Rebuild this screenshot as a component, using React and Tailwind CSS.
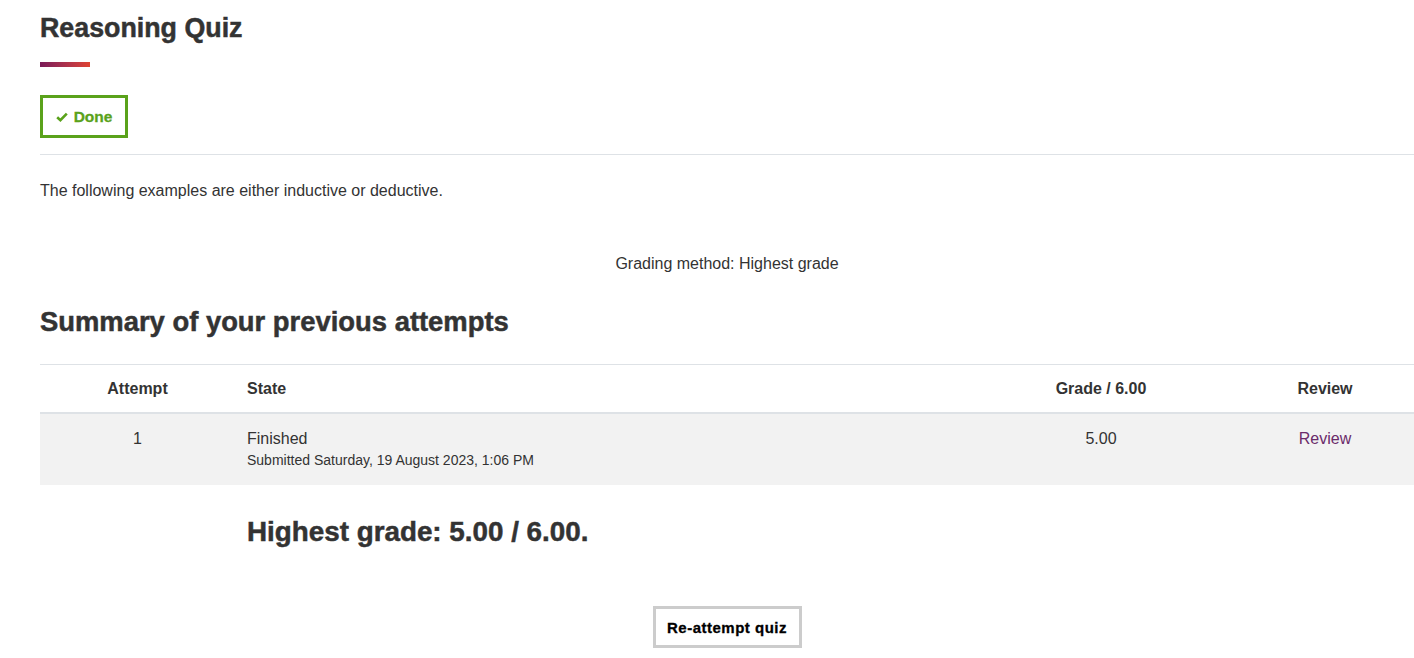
import React from "react";

const attempts = [
  {
    n: 1,
    state: "Finished",
    submitted: "Submitted Saturday, 19 August 2023, 1:06 PM",
    grade: "5.00",
  },
];

function CheckIcon() {
  return (
    <svg width="12" height="10" viewBox="0 0 12 10" className="mr-[6px]">
      <path d="M1.2 5.2 L4.4 8.2 L10.8 1.6" fill="none" stroke="#5aa21b" strokeWidth="2.6" />
    </svg>
  );
}

export default function App() {
  return (
    <div className="min-h-screen bg-white text-[#333] font-['Liberation_Sans',Arial,sans-serif] pl-10 overflow-hidden">
      <h2 className="pt-[13px] text-[26.8px] leading-[30px] font-bold text-[#333] [-webkit-text-stroke:0.5px_#333]">
        Reasoning Quiz
      </h2>
      <div className="mt-[19px] h-[5px] w-[50px] bg-gradient-to-r from-[#7a1a57] to-[#df4330]" />

      <div className="mt-[28px]">
        <span className="inline-flex items-center h-[43px] w-[88px] justify-center border-[3px] border-[#5aa21b] text-[#5aa21b] text-[15.5px] font-bold [-webkit-text-stroke:0.3px_#5aa21b]">
          <CheckIcon />
          Done
        </span>
      </div>

      <div className="mt-4 border-t border-[#dee2e6]" />

      <p className="mt-[26px] text-[16px] leading-[20px]">
        The following examples are either inductive or deductive.
      </p>

      <p className="mt-[53px] text-center text-[16px] leading-[20px]">
        Grading method: Highest grade
      </p>

      <h3 className="mt-[33px] text-[27.4px] leading-[30px] font-bold text-[#333] [-webkit-text-stroke:0.5px_#333]">
        Summary of your previous attempts
      </h3>

      <table className="mt-[27px] w-full border-collapse text-[16px]">
        <thead>
          <tr className="border-t border-[#dee2e6] border-b-2">
            <th className="w-[195px] h-[48px] text-center font-bold pt-[2px]">Attempt</th>
            <th className="text-left font-bold pl-[12px] pt-[2px]">State</th>
            <th className="w-[270px] text-center font-bold pt-[2px]">Grade / 6.00</th>
            <th className="w-[178px] text-center font-bold pt-[2px]">Review</th>
          </tr>
        </thead>
        <tbody>
          {attempts.map((a) => (
            <tr key={a.n} className="bg-[#f2f2f2] align-top">
              <td className="h-[72px] text-center pt-[15px] leading-[20px]">{a.n}</td>
              <td className="pl-[12px] pt-[15px] leading-[20px]">
                <div>{a.state}</div>
                <div className="text-[14px] mt-[3px] leading-[16px]">{a.submitted}</div>
              </td>
              <td className="text-center pt-[15px] leading-[20px]">{a.grade}</td>
              <td className="text-center pt-[15px] leading-[20px]">
                <a className="text-[#6a2b6a]">Review</a>
              </td>
            </tr>
          ))}
        </tbody>
      </table>

      <h3 className="mt-[32px] ml-[207px] text-[27.8px] leading-[30px] font-bold [-webkit-text-stroke:0.5px_#333]">
        Highest grade: 5.00 / 6.00.
      </h3>

      <div className="mt-[59px] flex justify-center">
        <button className="h-[42px] w-[149px] pt-[3px] border-[3px] border-[#cccccc] bg-white text-black text-[15px] tracking-[0.5px] font-bold [-webkit-text-stroke:0.3px_#000]">
          Re-attempt quiz
        </button>
      </div>
    </div>
  );
}
